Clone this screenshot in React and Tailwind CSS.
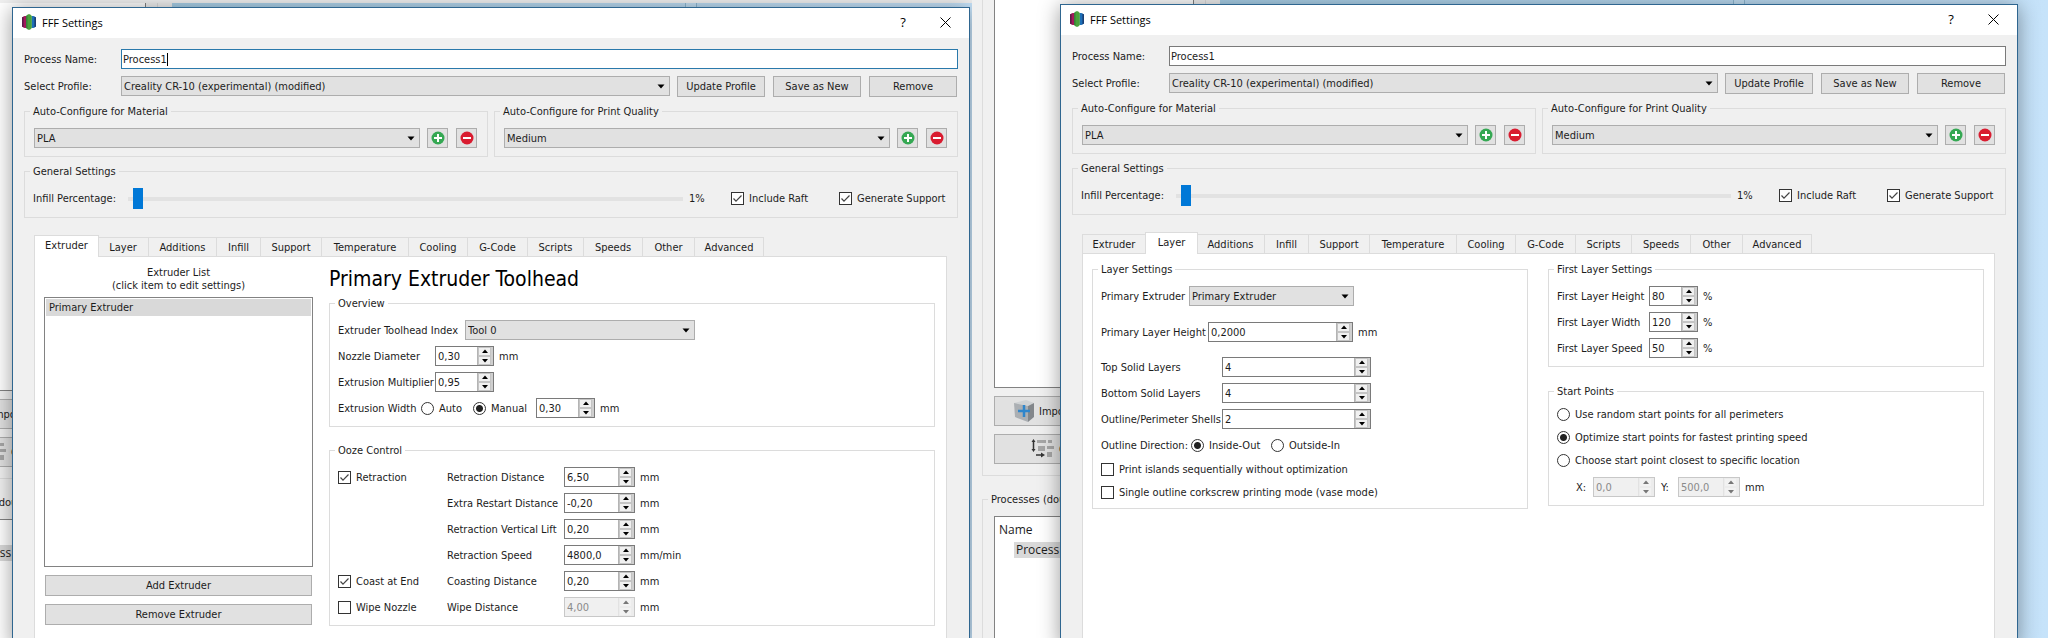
import React from 'react';
import { clsx } from 'clsx';

const TABS = [
  { name: 'Extruder', width: 'w-[64px]' },
  { name: 'Layer', width: 'w-[51px]' },
  { name: 'Additions', width: 'w-[68px]' },
  { name: 'Infill', width: 'w-[44px]' },
  { name: 'Support', width: 'w-[61px]' },
  { name: 'Temperature', width: 'w-[87px]' },
  { name: 'Cooling', width: 'w-[59px]' },
  { name: 'G-Code', width: 'w-[60px]' },
  { name: 'Scripts', width: 'w-[56px]' },
  { name: 'Speeds', width: 'w-[59px]' },
  { name: 'Other', width: 'w-[52px]' },
  { name: 'Advanced', width: 'w-[69px]' },
];

/* ---------- Icons ---------- */

const AppIcon = () => (
  <svg width="14" height="16" viewBox="0 0 14 16">
    <path d="M0 3.5 L2.5 2 H4.5 V14 H2.5 L0 12.5 Z" fill="#a3195b" />
    <path d="M0 3.5 L1.6 2.6 V13.4 L0 12.5 Z" fill="#5c1a48" />
    <path d="M14 3.5 L11.5 2 H9.5 V14 H11.5 L14 12.5 Z" fill="#1d6fb8" />
    <path d="M14 3.5 L12.4 2.6 V13.4 L14 12.5 Z" fill="#1b3f73" />
    <path d="M4.2 2 L6 0.3 H8 L9.8 2 V14 L8 15.7 H6 L4.2 14 Z" fill="#4aa23c" />
    <path d="M4.2 2 L5.4 0.9 V15.1 L4.2 14 Z" fill="#2f7a35" />
  </svg>
);

const AddIcon = () => (
  <svg width="14" height="14" viewBox="0 0 14 14">
    <circle cx="7" cy="7" r="6.5" fill="#35a853" />
    <path d="M7 3 V11 M3 7 H11" stroke="#fff" strokeWidth="2" />
  </svg>
);

const DeleteIcon = () => (
  <svg width="14" height="14" viewBox="0 0 14 14">
    <circle cx="7" cy="7" r="6.5" fill="#d91c30" />
    <path d="M3 7 H11" stroke="#fff" strokeWidth="2" />
  </svg>
);

const CubeIcon = () => (
  <svg width="22" height="24" viewBox="0 0 22 24">
    <path d="M1 4 L13 1 L21 4 L15 7 Z" fill="#cfd2d4" />
    <path d="M1 4 L15 7 V23 L2 18 Z" fill="#abafb3" />
    <path d="M15 7 L21 4 V18 L15 23 Z" fill="#83878b" />
    <path d="M11 6 V18 M5 12 H17" stroke="#2f86cc" strokeWidth="2.5" />
  </svg>
);

const ArrangeIcon = () => (
  <svg width="24" height="20" viewBox="0 0 24 20">
    <path d="M2.5 3 V11" stroke="#333" strokeWidth="1.5" />
    <path d="M2.5 0 L4.5 3 H0.5 Z M2.5 13 L4.5 10 H0.5 Z" fill="#333" />
    <path d="M6 1 H15 V4 H6 Z M17 1 H21 V4 H17 Z M7 7 H14 V12 H7 Z M16 7 H23 V10 H16 Z M16 13 H21 V18 H16 Z" fill="#a6a6a6" />
    <path d="M5 16 H11" stroke="#333" strokeWidth="1.5" />
    <path d="M10 13.5 L14 16 L10 18.5 Z" fill="#333" />
  </svg>
);

/* ---------- Controls ---------- */

const Button = ({ children, className, ...rest }) => (
  <button
    type="button"
    className={clsx('flex items-center justify-center border border-[#adadad] bg-[#e1e1e1] whitespace-nowrap', className)}
    {...rest}
  >
    {children}
  </button>
);

const Select = ({ id, label, value, className }) => (
  <div className={clsx('grid h-[20px]', className)}>
    <select
      id={id}
      aria-label={label}
      className="col-start-1 row-start-1 h-[20px] w-full appearance-none border border-[#adadad] bg-[#e1e1e1] pl-[2px] pr-[20px]"
    >
      <option>{value}</option>
    </select>
    <svg
      width="8"
      height="5"
      viewBox="0 0 8 5"
      className="pointer-events-none col-start-1 row-start-1 mr-[5px] self-center justify-self-end"
    >
      <path d="M0.5 0.5 H7.5 L4 4.5 Z" fill="#000" />
    </svg>
  </div>
);

const SpinBox = ({ id, label, value, disabled, className }) => (
  <div
    className={clsx(
      'flex h-[20px] border',
      disabled ? 'border-[#c8c8c8] bg-[#f0f0f0]' : 'border-[#7a7a7a] bg-white',
      className,
    )}
  >
    <input
      id={id}
      aria-label={label}
      defaultValue={value}
      disabled={disabled}
      className={clsx('w-0 min-w-0 flex-1 bg-transparent pl-[2px] outline-none', disabled && 'text-[#8a8a8a]')}
    />
    <div
      className={clsx(
        'flex w-[16px] flex-col border-l pr-[2px]',
        disabled ? 'border-[#e2e2e2] bg-[#ececec]' : 'border-[#b4b4b4] bg-[#cfcfcf]',
      )}
    >
      {['M2 4 L5 0.5 L8 4 Z', 'M2 1 L5 4.5 L8 1 Z'].map((arrow, i) => (
        <button
          key={arrow}
          type="button"
          disabled={disabled}
          aria-label={i === 0 ? 'Increase' : 'Decrease'}
          className={clsx(
            'flex flex-1 items-center justify-center border',
            disabled ? 'border-[#ececec] bg-[#f2f2f2]' : 'border-[#c4c4c4] bg-[#f0f0f0]',
          )}
        >
          <svg width="10" height="5" viewBox="0 0 10 5">
            <path d={arrow} fill={disabled ? '#777' : '#000'} />
          </svg>
        </button>
      ))}
    </div>
  </div>
);

const CheckBox = ({ label, checked, className }) => (
  <label className={clsx('flex items-center gap-[5px] whitespace-nowrap', className)}>
    <span className="grid">
      <input
        type="checkbox"
        defaultChecked={checked}
        className="peer col-start-1 row-start-1 h-[13px] w-[13px] appearance-none border border-[#333] bg-white"
      />
      <svg
        width="13"
        height="13"
        viewBox="0 0 13 13"
        className="pointer-events-none invisible col-start-1 row-start-1 peer-checked:visible"
      >
        <path d="M2.5 6.5 L5 9.2 L10.5 3.5" fill="none" stroke="#444" strokeWidth="1.2" />
      </svg>
    </span>
    {label}
  </label>
);

const Radio = ({ name, label, checked, className }) => (
  <label className={clsx('flex items-center gap-[5px] whitespace-nowrap', className)}>
    <input
      type="radio"
      name={name}
      defaultChecked={checked}
      className="h-[13px] w-[13px] appearance-none rounded-full border border-[#333] bg-white checked:bg-[radial-gradient(circle,#222_3px,transparent_4px)]"
    />
    {label}
  </label>
);

const GroupBox = ({ title, className, children }) => (
  <fieldset className={clsx('min-w-0 border border-[#dcdcdc] px-[8px] pt-[10px] pb-[8px]', className)}>
    <legend className="-ml-[3px] px-[3px]">{title}</legend>
    {children}
  </fieldset>
);

const SpinRow = ({ id, label, labelWidth, value, width, unit, disabled }) => (
  <div className="flex items-center">
    <label htmlFor={id} className={clsx('whitespace-nowrap', labelWidth)}>{label}</label>
    <SpinBox id={id} value={value} disabled={disabled} className={width} />
    {unit && <span className="ml-[5px]">{unit}</span>}
  </div>
);

/* ---------- Tab pages ---------- */

const ExtruderPage = () => (
  <div className="flex gap-[16px] pt-[9px] pr-[11px] pl-[9px]">
    <div className="flex w-[269px] flex-col">
      <p className="text-center">
        Extruder List
        <br />
        (click item to edit settings)
      </p>
      <ul className="mt-[5px] h-[270px] border border-[#828282] bg-white p-px">
        <li className="bg-[#d9d9d9] px-[3px] py-[2px]">Primary Extruder</li>
      </ul>
      <div className="mt-[8px] flex flex-col gap-[8px] px-px">
        <Button className="h-[21px]">Add Extruder</Button>
        <Button className="h-[21px]">Remove Extruder</Button>
      </div>
    </div>

    <div className="flex-1">
      <h2 className="text-[21px] leading-[26px] text-black">Primary Extruder Toolhead</h2>
      <GroupBox title="Overview" className="mt-[5px]">
        <div className="flex flex-col gap-[6px]">
          <div className="flex items-center">
            <label htmlFor="toolhead" className="w-[127px] whitespace-nowrap">Extruder Toolhead Index</label>
            <Select id="toolhead" value="Tool 0" className="w-[230px]" />
          </div>
          <SpinRow id="nozzle" label="Nozzle Diameter" labelWidth="w-[97px]" value="0,30" width="w-[59px]" unit="mm" />
          <SpinRow id="multiplier" label="Extrusion Multiplier" labelWidth="w-[97px]" value="0,95" width="w-[59px]" />
          <div className="flex items-center">
            <span className="w-[83px] whitespace-nowrap">Extrusion Width</span>
            <Radio name="extrusion-width" label="Auto" className="w-[52px]" />
            <Radio name="extrusion-width" label="Manual" checked className="w-[63px]" />
            <SpinBox label="Extrusion Width" value="0,30" className="w-[59px]" />
            <span className="ml-[5px]">mm</span>
          </div>
        </div>
      </GroupBox>

      <GroupBox title="Ooze Control" className="mt-[17px]">
        <div className="grid grid-cols-[109px_1fr] gap-y-[6px]">
          <CheckBox label="Retraction" checked />
          <SpinRow id="r-dist" label="Retraction Distance" labelWidth="w-[117px]" value="6,50" width="w-[71px]" unit="mm" />
          <span />
          <SpinRow id="r-extra" label="Extra Restart Distance" labelWidth="w-[117px]" value="-0,20" width="w-[71px]" unit="mm" />
          <span />
          <SpinRow id="r-lift" label="Retraction Vertical Lift" labelWidth="w-[117px]" value="0,20" width="w-[71px]" unit="mm" />
          <span />
          <SpinRow id="r-speed" label="Retraction Speed" labelWidth="w-[117px]" value="4800,0" width="w-[71px]" unit="mm/min" />
          <CheckBox label="Coast at End" checked />
          <SpinRow id="coast" label="Coasting Distance" labelWidth="w-[117px]" value="0,20" width="w-[71px]" unit="mm" />
          <CheckBox label="Wipe Nozzle" />
          <SpinRow id="wipe" label="Wipe Distance" labelWidth="w-[117px]" value="4,00" width="w-[71px]" unit="mm" disabled />
        </div>
      </GroupBox>
    </div>
  </div>
);

const LayerPage = () => (
  <div className="grid grid-cols-2 items-start gap-[20px] pt-[9px] pr-[10px] pl-[9px]">
    <GroupBox title="Layer Settings">
      <div className="flex items-center">
        <label htmlFor="layer-extruder" className="w-[88px] whitespace-nowrap">Primary Extruder</label>
        <Select id="layer-extruder" value="Primary Extruder" className="w-[165px]" />
      </div>
      <div className="mt-[16px] mb-[15px]">
        <SpinRow id="layer-height" label="Primary Layer Height" labelWidth="w-[107px]" value="0,2000" width="w-[145px]" unit="mm" />
      </div>
      <div className="flex flex-col gap-[6px]">
        <SpinRow id="top-layers" label="Top Solid Layers" labelWidth="w-[121px]" value="4" width="w-[149px]" />
        <SpinRow id="bottom-layers" label="Bottom Solid Layers" labelWidth="w-[121px]" value="4" width="w-[149px]" />
        <SpinRow id="shells" label="Outline/Perimeter Shells" labelWidth="w-[121px]" value="2" width="w-[149px]" />
        <div className="flex h-[20px] items-center">
          <span className="w-[90px] whitespace-nowrap">Outline Direction:</span>
          <Radio name="outline" label="Inside-Out" checked className="w-[80px]" />
          <Radio name="outline" label="Outside-In" />
        </div>
      </div>
      <div className="mt-[8px] mb-px flex flex-col gap-[10px]">
        <CheckBox label="Print islands sequentially without optimization" />
        <CheckBox label="Single outline corkscrew printing mode (vase mode)" />
      </div>
    </GroupBox>

    <div className="flex flex-col gap-[18px]">
      <GroupBox title="First Layer Settings">
        <div className="flex flex-col gap-[6px]">
          <SpinRow id="first-height" label="First Layer Height" labelWidth="w-[92px]" value="80" width="w-[49px]" unit="%" />
          <SpinRow id="first-width" label="First Layer Width" labelWidth="w-[92px]" value="120" width="w-[49px]" unit="%" />
          <SpinRow id="first-speed" label="First Layer Speed" labelWidth="w-[92px]" value="50" width="w-[49px]" unit="%" />
        </div>
      </GroupBox>
      <GroupBox title="Start Points">
        <div className="flex flex-col gap-[10px]">
          <Radio name="start" label="Use random start points for all perimeters" />
          <Radio name="start" label="Optimize start points for fastest printing speed" checked />
          <Radio name="start" label="Choose start point closest to specific location" />
          <div className="flex items-center pl-[19px]">
            <label htmlFor="start-x" className="w-[17px]">X:</label>
            <SpinBox id="start-x" value="0,0" disabled className="w-[62px]" />
            <label htmlFor="start-y" className="ml-[6px] w-[17px]">Y:</label>
            <SpinBox id="start-y" value="500,0" disabled className="w-[62px]" />
            <span className="ml-[5px]">mm</span>
          </div>
        </div>
      </GroupBox>
    </div>
  </div>
);

/* ---------- Dialog ---------- */

const AutoConfigure = ({ title, value }) => (
  <GroupBox title={title}>
    <div className="flex items-center px-px">
      <Select label={title} value={value} className="mr-[7px] flex-1" />
      <Button className="mr-[8px] h-[20px] w-[21px]" aria-label="Add"><AddIcon /></Button>
      <Button className="mr-px h-[20px] w-[21px]" aria-label="Delete"><DeleteIcon /></Button>
    </div>
  </GroupBox>
);

const SettingsDialog = ({ id, activeTab, editing, className, children }) => (
  <section className={clsx('absolute flex flex-col border border-[#2f6690] bg-[#f0f0f0] shadow-[0_2px_20px_rgba(0,0,0,0.4)]', className)}>
    <header className="flex h-[30px] items-center bg-white pb-[2px] pl-[9px] font-['Open_Sans','Noto_Sans',sans-serif]">
      <AppIcon />
      <h1 className="ml-[6px] flex-1 text-[11px] text-black">FFF Settings</h1>
      <button type="button" aria-label="Help" className="mr-[29px] w-[16px] text-[13px] text-black">?</button>
      <button type="button" aria-label="Close" className="mr-[18px]">
        <svg width="11" height="11" viewBox="0 0 11 11">
          <path d="M0.5 0.5 L10.5 10.5 M10.5 0.5 L0.5 10.5" stroke="#000" />
        </svg>
      </button>
    </header>

    <div className="flex flex-1 flex-col px-[11px] pt-[11px]">
      <div className="flex items-center">
        <label htmlFor={`${id}-name`} className="w-[97px]">Process Name:</label>
        <div className={clsx('flex h-[20px] flex-1 items-center border bg-white pl-px', editing ? 'border-[#2a79ab]' : 'border-[#7a7a7a]')}>
          <input id={`${id}-name`} defaultValue="Process1" className="field-sizing-content outline-none" />
          {editing && <span className="h-[13px] w-px bg-black" />}
        </div>
      </div>

      <div className="mt-[7px] flex">
        <label htmlFor={`${id}-profile`} className="w-[97px] self-center">Select Profile:</label>
        <Select id={`${id}-profile`} value="Creality CR-10 (experimental) (modified)" className="mr-[7px] flex-1" />
        <div className="flex gap-[8px] pr-px">
          <Button className="h-[21px] w-[88px]">Update Profile</Button>
          <Button className="h-[21px] w-[88px]">Save as New</Button>
          <Button className="h-[21px] w-[88px]">Remove</Button>
        </div>
      </div>

      <div className="mt-[8px] grid grid-cols-2 gap-[6px]">
        <AutoConfigure title="Auto-Configure for Material" value="PLA" />
        <AutoConfigure title="Auto-Configure for Print Quality" value="Medium" />
      </div>

      <GroupBox title="General Settings" className="mt-[8px]">
        <div className="flex items-center">
          <label htmlFor={`${id}-infill`} className="w-[95px]">Infill Percentage:</label>
          <input
            id={`${id}-infill`}
            type="range"
            defaultValue="1"
            className="h-[21px] flex-1 appearance-none bg-transparent [&::-webkit-slider-runnable-track]:h-[4px] [&::-webkit-slider-runnable-track]:bg-[#e2e2e2] [&::-webkit-slider-thumb]:-mt-[9px] [&::-webkit-slider-thumb]:h-[21px] [&::-webkit-slider-thumb]:w-[10px] [&::-webkit-slider-thumb]:appearance-none [&::-webkit-slider-thumb]:bg-[#0078d7]"
          />
          <output htmlFor={`${id}-infill`} className="ml-[6px] w-[42px]">1%</output>
          <CheckBox label="Include Raft" checked className="w-[108px]" />
          <CheckBox label="Generate Support" checked className="w-[110px]" />
        </div>
      </GroupBox>

      <nav role="tablist" className="mt-[17px] flex h-[21px] items-end pl-[10px]">
        {TABS.map((tab, i) => (
          <div key={tab.name} className={clsx('flex', tab.width)}>
            <button
              type="button"
              role="tab"
              aria-selected={tab.name === activeTab}
              className={clsx(
                'flex-1 border-t border-r border-[#dcdcdc]',
                tab.name === activeTab ? 'relative -mr-px -mb-px h-[22px] border-l bg-white pb-[2px]' : 'h-[19px]',
                tab.name === activeTab && i > 0 && '-ml-px',
                i === 0 && 'border-l',
              )}
            >
              {tab.name}
            </button>
          </div>
        ))}
      </nav>
      <div className="mr-[11px] ml-[10px] flex-1 border border-b-0 border-[#dcdcdc] bg-white">
        {children}
      </div>
    </div>
  </section>
);

/* ---------- Main window behind the dialogs ---------- */

const MainWindow = ({ className }) => (
  <div className={clsx('flex h-full', className)}>
    <aside className="flex w-[248px] shrink-0 flex-col bg-[#f0f0f0] pr-[14px] pl-[10px]">
      <div className="border-r border-b border-l border-[#dcdcdc] px-[11px] pb-[11px]">
        <div className="h-[388px] border-x border-b border-[#828282] bg-white" />
        <Button className="mt-[8px] h-[30px] w-full justify-start! gap-[4px] pl-[18px]">
          <CubeIcon />
          Import
        </Button>
        <Button className="mt-[8px] h-[30px] w-full justify-start! gap-[4px] pl-[36px]">
          <ArrangeIcon />
          Center and Arrange
        </Button>
      </div>
      <GroupBox title="Processes (double-click to edit)" className="mt-[17px] flex flex-1 flex-col border-b-0 pb-0">
        <div className="mx-[3px] h-[240px] border border-[#828282] bg-white pt-[6px] pl-[4px] font-['Open_Sans','Noto_Sans',sans-serif] text-[12px] leading-[14px]">
          Name
          <div className="mt-[5px] ml-[15px] bg-[#d9d9d9] px-[2px] py-px">Process1</div>
        </div>
      </GroupBox>
    </aside>
    <div className="flex flex-1 bg-gradient-to-r from-[#a9d0e8] to-[#c6e3fa]">
      <div className="ml-[513px] w-[12px] border-x border-[#8fb9d3] bg-white/10" />
    </div>
  </div>
);

const App = () => (
  <main className="flex h-screen overflow-hidden bg-[#f0f0f0] font-['DejaVu_Sans_Condensed','DejaVu_Sans',sans-serif] text-[11px] leading-[13px] text-[#1c1c1c]">
    <div className="relative flex-[972] overflow-hidden">
      <MainWindow className="-ml-[76px] pt-[3px]" />
      <SettingsDialog id="left" activeTab="Extruder" editing className="top-[7px] right-[2px] -bottom-[8px] left-[12px]">
        <ExtruderPage />
      </SettingsDialog>
    </div>
    <div className="relative flex-[1076] overflow-hidden">
      <MainWindow />
      <SettingsDialog id="right" activeTab="Layer" className="top-[4px] right-[30px] -bottom-[8px] left-[88px]">
        <LayerPage />
      </SettingsDialog>
    </div>
  </main>
);

export default App;
